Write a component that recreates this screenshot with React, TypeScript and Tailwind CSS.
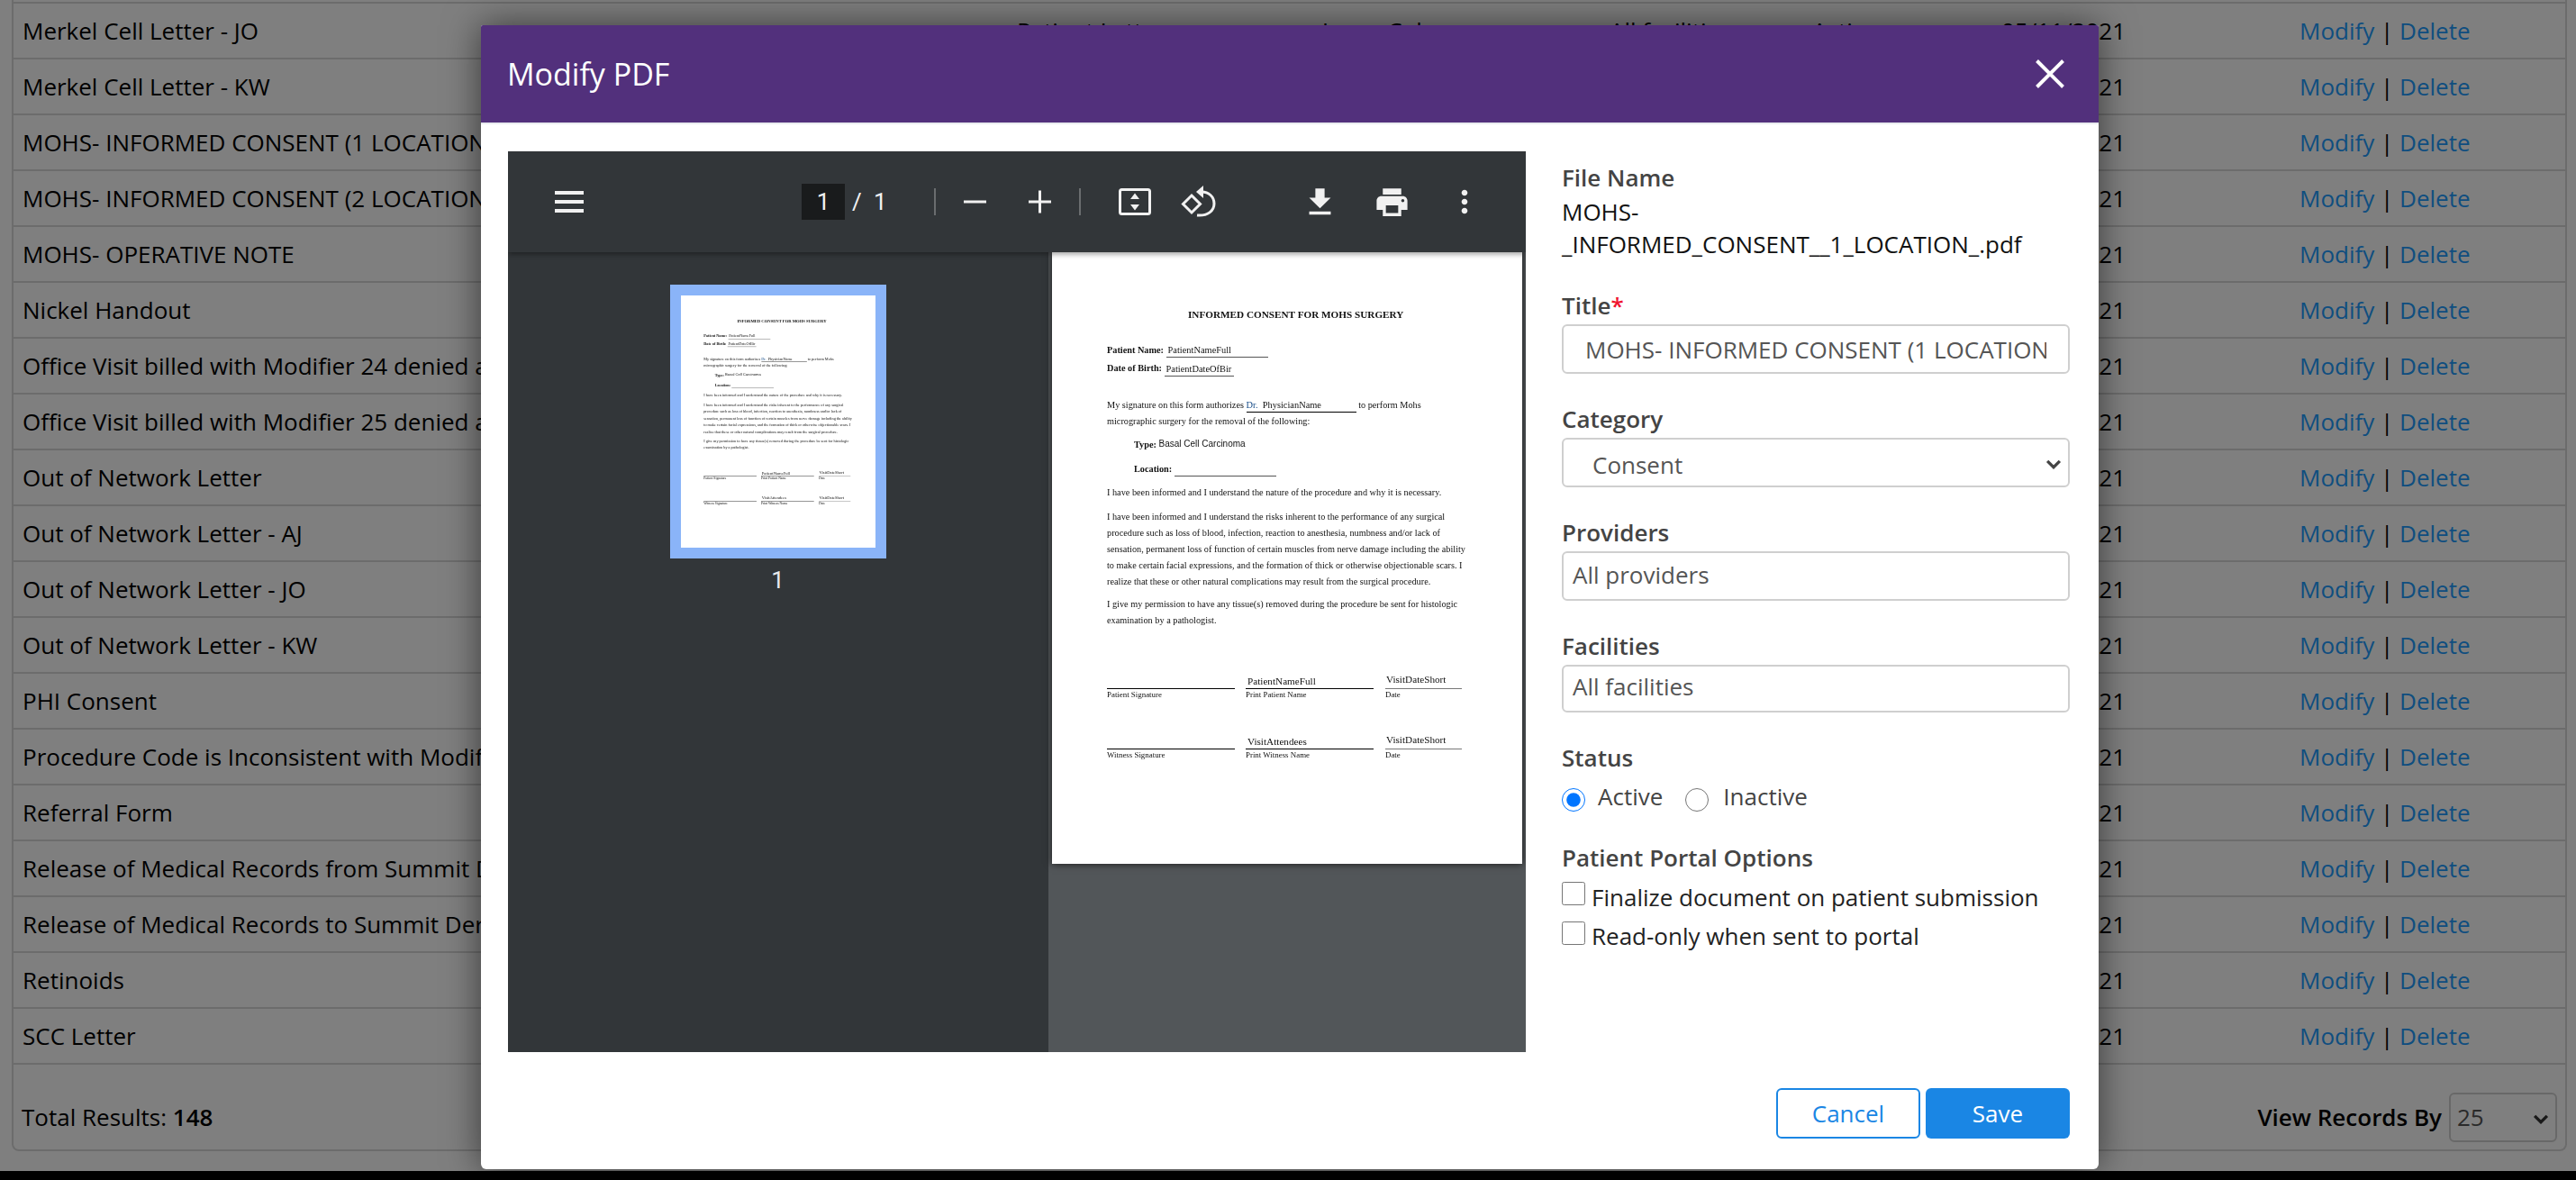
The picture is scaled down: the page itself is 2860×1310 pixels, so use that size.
import React from "react";

const rows = [
  "Merkel Cell Letter - JO",
  "Merkel Cell Letter - KW",
  "MOHS- INFORMED CONSENT (1 LOCATION)",
  "MOHS- INFORMED CONSENT (2 LOCATIONS)",
  "MOHS- OPERATIVE NOTE",
  "Nickel Handout",
  "Office Visit billed with Modifier 24 denied as bundled",
  "Office Visit billed with Modifier 25 denied as bundled",
  "Out of Network Letter",
  "Out of Network Letter - AJ",
  "Out of Network Letter - JO",
  "Out of Network Letter - KW",
  "PHI Consent",
  "Procedure Code is Inconsistent with Modifier Used",
  "Referral Form",
  "Release of Medical Records from Summit Dermatology",
  "Release of Medical Records to Summit Dermatology",
  "Retinoids",
  "SCC Letter",
];

function Row({ name }: { name: string }) {
  return (
    <div className="flex h-[62px] items-center border-b-2 border-[#d8d8d8] pl-[10px] text-[26px] whitespace-nowrap text-black">
      <div className="w-[1104px] overflow-hidden">{name}</div>
      <div className="w-[339px]">Patient Letter</div>
      <div className="w-[319px]">Jason Cohen</div>
      <div className="w-[225px]">All facilities</div>
      <div className="w-[210px]">Active</div>
      <div className="w-[331px]">05/11/2021</div>
      <div>
        <span className="text-[#1e9cff]">Modify</span> | <span className="text-[#1e9cff]">Delete</span>
      </div>
    </div>
  );
}

function Chevron({ className }: { className: string }) {
  return (
    <svg viewBox="0 0 18 12" className={className} fill="none" stroke="currentColor" strokeWidth="3.6">
      <path d="M1.5 2 L9 9.5 L16.5 2" />
    </svg>
  );
}

function Line({ children, className = "" }: { children: React.ReactNode; className?: string }) {
  return <div className={"h-[18px] leading-[18px] whitespace-nowrap " + className}>{children}</div>;
}

function SigRow({ a, b, c, d, className }: { a: string; b: string; c: string; d: string; className: string }) {
  return (
    <div className={"flex gap-[12px] " + className}>
      <div className="w-[142px]">
        <div className="h-[20px] border-b border-black" />
        <div className="h-[10px] text-[8.9px] leading-[12px]">{a}</div>
      </div>
      <div className="w-[142px]">
        <div className="h-[20px] border-b border-black pl-[2px] text-[11.2px] leading-[22px]">{b}</div>
        <div className="h-[10px] text-[8.9px] leading-[12px]">Print {a === "Patient Signature" ? "Patient" : "Witness"} Name</div>
      </div>
      <div className="ml-[1px] w-[85px]">
        <div className="h-[20px] border-b border-[#777] pl-[1px] text-[11.2px] leading-[19px]">{c}</div>
        <div className="h-[10px] text-[8.9px] leading-[12px]">{d}</div>
      </div>
    </div>
  );
}

function DocPage() {
  return (
    <div className="h-[679px] w-[522px] bg-white pt-[60px] pl-[61px] font-['Liberation_Serif',serif] text-[10.27px] text-[#111]">
      <div className="h-[18px] pl-[90px] text-[11.2px] leading-[18px] font-bold whitespace-nowrap">INFORMED CONSENT FOR MOHS SURGERY</div>
      <Line className="mt-[22px]">
        <b>Patient Name:</b>{" "}
        <span className="inline-block w-[113px] border-b border-[#555] pl-[2px] text-[10.4px] leading-[14px]">PatientNameFull</span>
      </Line>
      <Line className="mt-[2px]">
        <b>Date of Birth:</b>{" "}
        <span className="inline-block w-[77px] overflow-hidden border-b border-[#555] pl-[2px] align-bottom text-[10.4px] leading-[14px]">PatientDateOfBir</span>
      </Line>
      <Line className="mt-[23px]">
        My signature on this form authorizes{" "}
        <span className="inline-block w-[122px] border-b border-black text-[10.4px] leading-[14px]">
          <span className="text-[#1a4f8a]">Dr.</span>&nbsp;&nbsp;PhysicianName
        </span>{" "}
        to perform Mohs
      </Line>
      <Line>micrographic surgery for the removal of the following:</Line>
      <Line className="mt-[8px] pl-[30px]">
        <b>Type:</b> <span className="relative top-[-1px] font-['Liberation_Sans',sans-serif] text-[10px]">Basal Cell Carcinoma</span>
      </Line>
      <Line className="mt-[9px] pl-[30px]">
        <b>Location:</b> <span className="inline-block w-[113px] border-b border-[#555] leading-[14px]">&nbsp;</span>
      </Line>
      <Line className="mt-[8px]">I have been informed and I understand the nature of the procedure and why it is necessary.</Line>
      <Line className="mt-[9px]">I have been informed and I understand the risks inherent to the performance of any surgical</Line>
      <Line>procedure such as loss of blood, infection, reaction to anesthesia, numbness and/or lack of</Line>
      <Line>sensation, permanent loss of function of certain muscles from nerve damage including the ability</Line>
      <Line>to make certain facial expressions, and the formation of thick or otherwise objectionable scars. I</Line>
      <Line>realize that these or other natural complications may result from the surgical procedure.</Line>
      <Line className="mt-[7px]">I give my permission to have any tissue(s) removed during the procedure be sent for histologic</Line>
      <Line>examination by a pathologist.</Line>
      <SigRow className="mt-[47px]" a="Patient Signature" b="PatientNameFull" c="VisitDateShort" d="Date" />
      <SigRow className="mt-[37px]" a="Witness Signature" b="VisitAttendees" c="VisitDateShort" d="Date" />
    </div>
  );
}

function Toolbar() {
  return (
    <div className="relative z-10 flex h-[112px] items-center bg-[#323639] pl-[52px] font-['Roboto',sans-serif] text-[26px] text-[#f1f1f1] shadow-[0_2px_6px_rgba(0,0,0,0.4)]">
      <svg viewBox="0 0 32 24" className="h-[24px] w-[32px]" fill="#f1f1f1">
        <rect width="32" height="4" />
        <rect y="10" width="32" height="4" />
        <rect y="20" width="32" height="4" />
      </svg>
      <div className="ml-[242px] flex h-[40px] w-[48px] items-center justify-center bg-[#191b1c]">1</div>
      <span className="ml-[8px] w-[24px]">/</span>
      <span className="w-[15px]">1</span>
      <div className="ml-[52px] h-[30px] w-[2px] bg-[#6a6d6f]" />
      <svg viewBox="0 0 26 26" className="ml-[31px] h-[26px] w-[26px]" fill="#f1f1f1">
        <rect y="11.5" width="25" height="3" />
      </svg>
      <svg viewBox="0 0 26 26" className="ml-[46px] h-[26px] w-[26px]" fill="#f1f1f1">
        <rect y="11.5" width="25" height="3" />
        <rect x="11" y="0.5" width="3" height="25" />
      </svg>
      <div className="ml-[30px] h-[30px] w-[2px] bg-[#6a6d6f]" />
      <svg viewBox="0 0 36 30" className="ml-[42px] h-[30px] w-[36px]">
        <rect x="1.5" y="1.5" width="33" height="27" rx="2" fill="none" stroke="#f1f1f1" strokeWidth="3" />
        <path d="M18 5.5 L23 12 L13 12 Z M18 24.5 L23 18 L13 18 Z" fill="#f1f1f1" />
      </svg>
      <svg viewBox="0 0 40 40" className="ml-[33px] h-[40px] w-[40px]">
        <path d="M12 13 L21.5 22.5 L12 32 L2.5 22.5 Z" fill="none" stroke="#f1f1f1" strokeWidth="3" />
        <path d="M22 9 C31 8.5 37 14.5 37 22 C37 30 30 36 18 35" fill="none" stroke="#f1f1f1" strokeWidth="3" />
        <path d="M25 2 L25 16 L17 9 Z" fill="#f1f1f1" />
      </svg>
      <svg viewBox="0 0 24 24" className="ml-[94px] h-[41px] w-[41px]" fill="#f1f1f1">
        <path d="M19 9h-4V3H9v6H5l7 7 7-7zM5 18v2h14v-2H5z" />
      </svg>
      <svg viewBox="0 0 24 24" className="ml-[39px] h-[41px] w-[41px]" fill="#f1f1f1">
        <path d="M19 8H5c-1.66 0-3 1.34-3 3v6h4v4h12v-4h4v-6c0-1.66-1.34-3-3-3zm-3 11H8v-5h8v5zm3-7c-.55 0-1-.45-1-1s.45-1 1-1 1 .45 1 1-.45 1-1 1zm-1-9H6v4h12V3z" />
      </svg>
      <svg viewBox="0 0 24 24" className="ml-[40px] h-[40px] w-[40px]" fill="#f1f1f1">
        <path d="M12 8c1.1 0 2-.9 2-2s-.9-2-2-2-2 .9-2 2 .9 2 2 2zm0 2c-1.1 0-2 .9-2 2s.9 2 2 2 2-.9 2-2-.9-2-2-2zm0 6c-1.1 0-2 .9-2 2s.9 2 2 2 2-.9 2-2-.9-2-2-2z" />
      </svg>
    </div>
  );
}

function Viewer() {
  return (
    <div className="flex h-[1000px] w-[1130px] shrink-0 flex-col overflow-hidden bg-[#323639]">
      <Toolbar />
      <div className="flex min-h-0 flex-1">
        <div className="flex w-[600px] shrink-0 flex-col items-center pt-[36px] pr-[1px]">
          <div className="h-[304px] w-[240px] overflow-hidden bg-[#8ab4f8] p-[12px]">
            <div className="h-[280px] w-[216px] overflow-hidden bg-white">
              <div className="origin-top-left scale-[0.4138] blur-[0.5px]">
                <DocPage />
              </div>
            </div>
          </div>
          <div className="mt-[5px] font-['Roboto',sans-serif] text-[26px] text-[#e8eaed]">1</div>
        </div>
        <div className="flex-1 bg-[#525659] pl-[4px]">
          <div className="w-[522px] shadow-[0_0_8px_rgba(0,0,0,0.75)]">
            <div className="blur-[0.3px]">
              <DocPage />
            </div>
          </div>
        </div>
      </div>
    </div>
  );
}

function Label({ children, className = "" }: { children: React.ReactNode; className?: string }) {
  return <div className={"h-[36px] text-[26px] leading-[36px] font-semibold text-[#444] " + className}>{children}</div>;
}

const box =
  "block w-full rounded-[6px] border-2 border-[#cfcfcf] bg-white text-[26px] text-[#555] outline-none";

function Form() {
  return (
    <div className="ml-[40px] w-[564px] shrink-0 pt-[11px]">
      <Label>File Name</Label>
      <div className="mt-[2px] text-[26px] leading-[36px] text-[#111]">
        MOHS-
        <br />
        _INFORMED_CONSENT__1_LOCATION_.pdf
      </div>
      <Label className="mt-[32px]">
        Title<span className="text-[#f0142f]">*</span>
      </Label>
      <input
        readOnly
        value="MOHS- INFORMED CONSENT (1 LOCATION)"
        className={box + " mt-[3px] h-[55px] px-[24px]"}
      />
      <Label className="mt-[32px]">Category</Label>
      <div className="relative mt-[3px]">
        <select className={box + " h-[55px] appearance-none pt-[6px] pl-[32px]"} defaultValue="Consent">
          <option>Consent</option>
        </select>
        <Chevron className="absolute top-[24px] right-[9px] h-[11px] w-[18px] text-[#444]" />
      </div>
      <Label className="mt-[32px]">Providers</Label>
      <div className={box + " mt-[3px] flex h-[55px] items-center pb-[3px] pl-[10px]"}>All providers</div>
      <Label className="mt-[32px]">Facilities</Label>
      <div className={box + " mt-[3px] flex h-[53px] items-center pb-[4px] pl-[10px]"}>All facilities</div>
      <Label className="mt-[32px]">Status</Label>
      <div className="mt-[9px] flex h-[36px] items-center text-[26px] text-[#444]">
        <input type="radio" name="status" defaultChecked className="m-0 mt-[4px] h-[26px] w-[26px]" />
        <span className="ml-[14px] pb-[4px] leading-[36px]">Active</span>
        <input type="radio" name="status" className="m-0 mt-[4px] ml-[25px] h-[26px] w-[26px]" />
        <span className="ml-[16px] pb-[4px] leading-[36px]">Inactive</span>
      </div>
      <Label className="mt-[30px]">Patient Portal Options</Label>
      <label className="mt-[8px] flex h-[36px] items-start text-[26px] leading-[36px] text-[#222]">
        <input type="checkbox" className="m-0 mt-[1px] h-[26px] w-[26px]" />
        <span className="ml-[7px]">Finalize document on patient submission</span>
      </label>
      <label className="mt-[7px] flex h-[36px] items-start text-[26px] leading-[36px] text-[#222]">
        <input type="checkbox" className="m-0 mt-[2px] h-[26px] w-[26px]" />
        <span className="ml-[7px]">Read-only when sent to portal</span>
      </label>
    </div>
  );
}

export default function App() {
  return (
    <div className="h-[1310px] w-[2860px] overflow-hidden bg-black font-['Open_Sans',sans-serif]">
      <div className="relative h-[1300px] overflow-hidden bg-white">
        <div className="ml-[13px] h-[1278px] w-[2837px] rounded-b-[8px] border-x-2 border-b-2 border-[#d8d8d8]">
          <div className="h-[4px] border-b-2 border-[#d8d8d8]" />
          {rows.map((r) => (
            <Row key={r} name={r} />
          ))}
          <div className="flex h-[94px] items-center justify-between pt-[22px] pr-[9px] pl-[9px] text-[26px] text-black">
            <div>
              Total Results: <b className="font-semibold">148</b>
            </div>
            <div className="flex items-center font-semibold">
              View Records By
              <div className="relative ml-[8px]">
                <div className="flex h-[55px] w-[120px] items-center rounded-[6px] border-2 border-[#d0d0d0] pl-[7px] font-normal text-[#555]">25</div>
                <Chevron className="absolute top-[24px] right-[9px] h-[11px] w-[18px] text-[#333]" />
              </div>
            </div>
          </div>
        </div>

        <div className="absolute inset-0 bg-black/50" />

        <div className="absolute top-[28px] left-[534px] h-[1270px] w-[1796px] overflow-hidden rounded-t-[2px] rounded-b-[6px] bg-white shadow-[0_0_40px_rgba(0,0,0,0.55)]">
          <div className="flex h-[110px] items-center justify-between border-b-2 border-[#e9ecef] bg-[#52307c] pr-[38px] pl-[29px] text-[34px] text-white">
            <span>Modify PDF</span>
            <svg viewBox="0 0 32 32" className="h-[32px] w-[32px]" stroke="#fff" strokeWidth="4">
              <path d="M1.5 1.5 L30.5 30.5 M30.5 1.5 L1.5 30.5" />
            </svg>
          </div>
          <div className="flex pt-[30px] pl-[30px]">
            <Viewer />
            <Form />
          </div>
          <div className="mt-[40px] flex justify-end gap-[6px] pr-[32px] text-[26px]">
            <button className="h-[56px] w-[160px] rounded-[6px] border-2 border-[#1a86e4] bg-white text-[#1a86e4]">Cancel</button>
            <button className="h-[56px] w-[160px] rounded-[6px] bg-[#1a86e4] text-white">Save</button>
          </div>
        </div>
      </div>
    </div>
  );
}
